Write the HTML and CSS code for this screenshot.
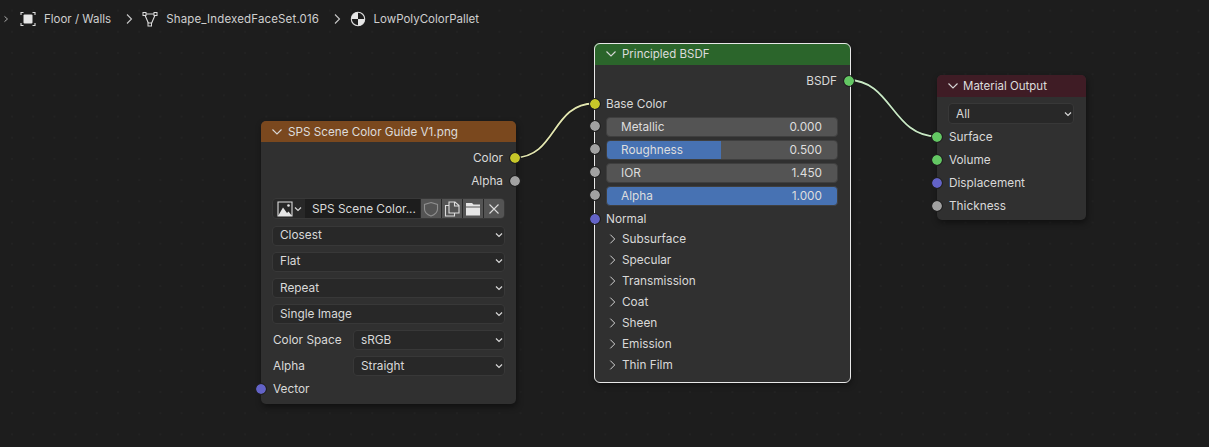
FILE: index.html
```html
<!DOCTYPE html>
<html lang="en">
<head>
<meta charset="utf-8">
<title>Shader Editor</title>
<link rel="stylesheet" href="styles.css">
</head>
<body>
<div class="editor">
  <nav class="crumbs">
    <svg class="chev first" viewBox="0 0 8 12"><path d="M2 2.500 6 6 2 9.500"/></svg>
    <svg class="ico" viewBox="0 0 16 16"><path class="st" d="M1 4V1.500H3.500M12.500 1.500H15V4M15 12V14.500H12.500M3.500 14.500H1V12"/><rect class="fl" x="3.500" y="3.500" width="9" height="9" rx="1"/></svg>
    <span class="crumb c1">Floor / Walls</span>
    <svg class="chev" viewBox="0 0 8 12"><path d="M2 1.500 6.500 6 2 10.500"/></svg>
    <svg class="ico" viewBox="0 0 16 16"><path class="st" d="M2.500 3H13.500L9.500 12.500H6.500Z"/><rect class="nd" x="1" y="1.500" width="3" height="3"/><rect class="nd" x="12" y="1.500" width="3" height="3"/><rect class="nd" x="6" y="12" width="3.500" height="3"/></svg>
    <span class="crumb c2">Shape_IndexedFaceSet.016</span>
    <svg class="chev last" viewBox="0 0 8 12"><path d="M2 1.500 6.500 6 2 10.500"/></svg>
    <svg class="ico" viewBox="0 0 16 16"><circle class="st" cx="8" cy="8" r="6.700"/><path class="fl" d="M8 1.300A6.700 6.700 0 0 0 1.300 8H8ZM8 8V14.700A6.700 6.700 0 0 0 14.700 8Z"/></svg>
    <span class="crumb">LowPolyColorPallet</span>
  </nav>

  <svg class="wires" viewBox="0 0 1209 447">
    <path class="wire-edge" d="M515 157.500C556 157.500 552 103.500 594 103.500"/>
    <path class="wire w-yellow" d="M515 157.500C556 157.500 552 103.500 594 103.500"/>
    <path class="wire-edge" d="M848 80C892 80 892 136.500 937 136.500"/>
    <path class="wire w-green" d="M848 80C892 80 892 136.500 937 136.500"/>
  </svg>

  <section class="node image-node">
    <header class="head head-image"><svg class="down" viewBox="0 0 12 12"><path d="M1.500 3.500 6 8 10.500 3.500"/></svg>SPS Scene Color Guide V1.png</header>
    <div class="body">
      <div class="sock-row out"><span>Color</span><i class="sock s-yellow"></i></div>
      <div class="sock-row out"><span>Alpha</span><i class="sock s-gray"></i></div>
      <div class="img-row">
        <span class="img-pick">
          <svg class="pic" viewBox="0 0 16 16"><path class="st" d="M1 1H15V15H1Z"/><path class="fl" d="M1 15 6 6.500 10 12 11.500 10.500 15 15Z"/><circle class="fl" cx="11.500" cy="4.500" r="1.300"/></svg>
          <svg class="tiny" viewBox="0 0 8 8"><path d="M1 2.500 4 5.500 7 2.500"/></svg>
        </span>
        <span class="img-name">SPS Scene Color...</span>
        <span class="img-btn shield"><svg viewBox="0 0 16 16"><path class="st" d="M8 1.500 14.500 3.500V8C14.500 11.500 11 14 8 15 5 14 1.500 11.500 1.500 8V3.500Z"/></svg></span>
        <span class="img-btn"><svg viewBox="0 0 16 16"><path class="st" d="M5 4.500H1.500V15H10.500V12M5 1H11L15 4.500V12H5ZM10.500 1V5H15"/></svg></span>
        <span class="img-btn"><svg viewBox="0 0 16 16"><path class="fl" d="M1 2H7L8.500 3.500H15V5.500H1ZM1 6.500H15V14.500H1Z"/></svg></span>
        <span class="img-btn"><svg viewBox="0 0 16 16"><path class="st" d="M3.500 3.500 12.500 12.500M12.500 3.500 3.500 12.500"/></svg></span>
      </div>
      <div class="drop gap-first lift">Closest<svg class="tiny" viewBox="0 0 8 8"><path d="M1 2.500 4 5.500 7 2.500"/></svg></div>
      <div class="drop gap lift">Flat<svg class="tiny" viewBox="0 0 8 8"><path d="M1 2.500 4 5.500 7 2.500"/></svg></div>
      <div class="drop gap">Repeat<svg class="tiny" viewBox="0 0 8 8"><path d="M1 2.500 4 5.500 7 2.500"/></svg></div>
      <div class="drop gap">Single Image<svg class="tiny" viewBox="0 0 8 8"><path d="M1 2.500 4 5.500 7 2.500"/></svg></div>
      <div class="prop gap"><label>Color Space</label><div class="drop">sRGB<svg class="tiny" viewBox="0 0 8 8"><path d="M1 2.500 4 5.500 7 2.500"/></svg></div></div>
      <div class="prop gap"><label>Alpha</label><div class="drop">Straight<svg class="tiny" viewBox="0 0 8 8"><path d="M1 2.500 4 5.500 7 2.500"/></svg></div></div>
      <div class="sock-row in vec"><i class="sock s-blue"></i><span>Vector</span></div>
    </div>
  </section>

  <section class="node bsdf-node">
    <header class="head head-bsdf"><svg class="down" viewBox="0 0 12 12"><path d="M1.500 3.500 6 8 10.500 3.500"/></svg>Principled BSDF</header>
    <div class="body">
      <div class="sock-row out"><span>BSDF</span><i class="sock s-green"></i></div>
      <div class="sock-row in"><i class="sock s-yellow"></i><span>Base Color</span></div>
      <div class="sliders">
        <div class="slider"><i class="sock s-gray"></i><div class="track"><span>Metallic</span><span>0.000</span></div></div>
        <div class="slider"><i class="sock s-gray"></i><div class="track half"><span>Roughness</span><span>0.500</span></div></div>
        <div class="slider"><i class="sock s-gray"></i><div class="track"><span>IOR</span><span>1.450</span></div></div>
        <div class="slider"><i class="sock s-gray"></i><div class="track full"><span>Alpha</span><span>1.000</span></div></div>
      </div>
      <div class="sock-row in"><i class="sock s-blue"></i><span>Normal</span></div>
      <div class="panels">
        <div class="panel"><svg class="right" viewBox="0 0 8 12"><path d="M1.500 1 6.500 6 1.500 11"/></svg>Subsurface</div>
        <div class="panel"><svg class="right" viewBox="0 0 8 12"><path d="M1.500 1 6.500 6 1.500 11"/></svg>Specular</div>
        <div class="panel"><svg class="right" viewBox="0 0 8 12"><path d="M1.500 1 6.500 6 1.500 11"/></svg>Transmission</div>
        <div class="panel"><svg class="right" viewBox="0 0 8 12"><path d="M1.500 1 6.500 6 1.500 11"/></svg>Coat</div>
        <div class="panel"><svg class="right" viewBox="0 0 8 12"><path d="M1.500 1 6.500 6 1.500 11"/></svg>Sheen</div>
        <div class="panel"><svg class="right" viewBox="0 0 8 12"><path d="M1.500 1 6.500 6 1.500 11"/></svg>Emission</div>
        <div class="panel"><svg class="right" viewBox="0 0 8 12"><path d="M1.500 1 6.500 6 1.500 11"/></svg>Thin Film</div>
      </div>
    </div>
  </section>

  <section class="node output-node">
    <header class="head head-output"><svg class="down" viewBox="0 0 12 12"><path d="M1.500 3.500 6 8 10.500 3.500"/></svg>Material Output</header>
    <div class="body">
      <div class="drop">All<svg class="tiny" viewBox="0 0 8 8"><path d="M1 2.500 4 5.500 7 2.500"/></svg></div>
      <div class="sock-row in first-sock"><i class="sock s-green"></i><span>Surface</span></div>
      <div class="sock-row in"><i class="sock s-green"></i><span>Volume</span></div>
      <div class="sock-row in"><i class="sock s-blue"></i><span>Displacement</span></div>
      <div class="sock-row in"><i class="sock s-gray"></i><span>Thickness</span></div>
    </div>
  </section>
</div>
</body>
</html>
```
FILE: styles.css
```css
* { box-sizing: border-box; }
html, body { margin: 0; padding: 0; }
body { width: 1209px; height: 447px; overflow: hidden; background: #1d1d1d; font-family: Inter, "Liberation Sans", sans-serif; font-size: 11.800px; color: #d9d9d9; }
.editor { position: relative; width: 1209px; height: 447px; background-color: #1d1d1d; background-image: radial-gradient(circle at center, #222222 .8px, transparent 1.2px); background-size: 21.200px 21.200px; background-position: 107.400px 42.400px; }
.crumbs { display: flex; align-items: center; height: 38px; padding-left: 3px; font-size: 11.500px; color: #cfcfcf; }
.crumb { white-space: nowrap; }
.c1 { margin-right: 14px; }
.c2 { margin-right: 14px; letter-spacing: .15px; }
.chev { width: 8px; height: 12px; flex: none; margin-right: 9px; }
.chev path { fill: none; stroke: #c8c8c8; stroke-width: 1.100; }
.chev.first { width: 6px; margin-right: 11px; }
.chev.last { margin-right: 8.500px; }
.ico { width: 16px; height: 16px; flex: none; margin-right: 8px; }
.st { fill: none; stroke: #dcdcdc; stroke-width: 1.100; }
.fl { fill: #e6e6e6; }
.nd { fill: #1d1d1d; stroke: #dcdcdc; stroke-width: 1; }
.wires { position: absolute; left: 0; top: 0; width: 1209px; height: 447px; z-index: 1; }
.wire { fill: none; stroke-width: 1.800; }
.wire-edge { fill: none; stroke: #0e0e0e; stroke-width: 3.200; opacity: .55; }
.w-yellow { stroke: #e3e6b0; }
.w-green { stroke: #c8e8c4; }
.node { position: absolute; z-index: 2; background: #303030; border-radius: 5px; box-shadow: 1px 3px 6px rgba(0,0,0,.45); }
.image-node { left: 261px; top: 121px; width: 255px; height: 283px; }
.bsdf-node { left: 594px; top: 43px; width: 256px; height: 339px; }
.bsdf-node::after { content: ""; position: absolute; inset: -.5px; border: 1.500px solid #e8e8e8; border-radius: 6px; pointer-events: none; }
.output-node { left: 937px; top: 75px; width: 149px; height: 145px; }
.head { display: flex; align-items: center; height: 21px; padding-left: 10px; border-radius: 5px 5px 0 0; font-size: 11.700px; color: #dcdcdc; white-space: nowrap; }
.head-image { background: #7a481e; }
.head-bsdf { background: #2b652b; height: 22px; padding-left: 11px; font-size: 11.500px; }
.head-output { background: #3f1c25; height: 22px; font-size: 11.500px; }
.down { width: 12px; height: 12px; margin-right: 5px; flex: none; }
.head-output .down { margin-right: 4px; }
.down path { fill: none; stroke: #d8d8d8; stroke-width: 1.100; }
.body { display: flex; flex-direction: column; padding: 0 11px; }
.sock-row { position: relative; display: flex; align-items: center; height: 23px; }
.out { justify-content: flex-end; }
.in { padding-left: 1px; }
.sock { position: absolute; z-index: 3; width: 12px; height: 12px; border-radius: 50%; border: 1px solid #1f1f1f; background-clip: padding-box; }
.s-yellow { background-color: #c7c729; }
.s-gray { background-color: #a1a1a1; }
.s-blue { background-color: #6363c7; }
.s-green { background-color: #63c763; }
.out .sock { right: -16px; top: 5.500px; }
.in .sock { left: -17px; top: 5.500px; }
.image-node .body { padding-top: 4px; }
.image-node .out { padding-right: 2px; }
.img-row { display: flex; align-items: stretch; height: 21px; margin-top: 6px; background: #282828; border: 1px solid #383838; border-radius: 4px; }
.img-pick { display: flex; align-items: center; width: 32px; padding-left: 4px; flex: none; }
.pic { width: 16px; height: 16px; flex: none; }
.img-name { display: flex; align-items: center; width: 115px; padding-left: 7px; background: #1d1d1d; white-space: nowrap; }
.img-btn { display: flex; align-items: center; justify-content: center; flex: 1; margin-left: 1px; background: #545454; }
.img-btn:last-child { border-radius: 0 3px 3px 0; }
.img-btn svg { width: 16px; height: 16px; }
.shield .st { stroke: #8f8f8f; }
.drop { display: flex; align-items: center; justify-content: space-between; height: 20px; padding: 0 1px 0 7px; background: #282828; border: 1px solid #383838; border-radius: 4px; white-space: nowrap; }
.lift { padding-bottom: 2px; }
.tiny { width: 8px; height: 8px; flex: none; margin-left: 1px; }
.tiny path { fill: none; stroke: #d8d8d8; stroke-width: 1.200; }
.gap-first { margin-top: 7px; }
.gap { margin-top: 6px; }
.prop { display: flex; align-items: center; }
.prop label { width: 81px; padding-left: 1px; flex: none; }
.prop .drop { flex: 1; }
.vec { margin-top: 1px; }
.vec.in .sock { top: 6px; }
.bsdf-node .body { padding: 4px 12px 0 12px; }
.bsdf-node .in { padding-left: 0; }
.bsdf-node .in .sock { left: -17.500px; }
.bsdf-node .out { padding-right: 1px; }
.bsdf-node .out .sock { right: -16.500px; }
.sliders { display: flex; flex-direction: column; gap: 3px; margin: 2px 0 1px; }
.slider { position: relative; height: 20px; }
.slider .sock { left: -17.500px; top: 3px; }
.track { display: flex; align-items: center; justify-content: space-between; height: 20px; padding: 0 15px 0 14px; border: 1px solid #3f3f3f; border-radius: 4px; background: #545454; color: #dedede; }
.track.half { background: linear-gradient(90deg, #4772b3 49.500%, #545454 49.500%); }
.track.full { background: #4772b3; }
.panels { display: flex; flex-direction: column; margin-top: -2px; }
.panel { display: flex; align-items: center; height: 21px; padding-left: 3px; }
.right { width: 7px; height: 12px; margin-right: 6px; flex: none; }
.right path { fill: none; stroke: #d8d8d8; stroke-width: 1.100; }
.output-node .body { padding: 6px 12px 0 11px; }
.output-node .drop { height: 21px; }
.first-sock { margin-top: 1px; }
```
